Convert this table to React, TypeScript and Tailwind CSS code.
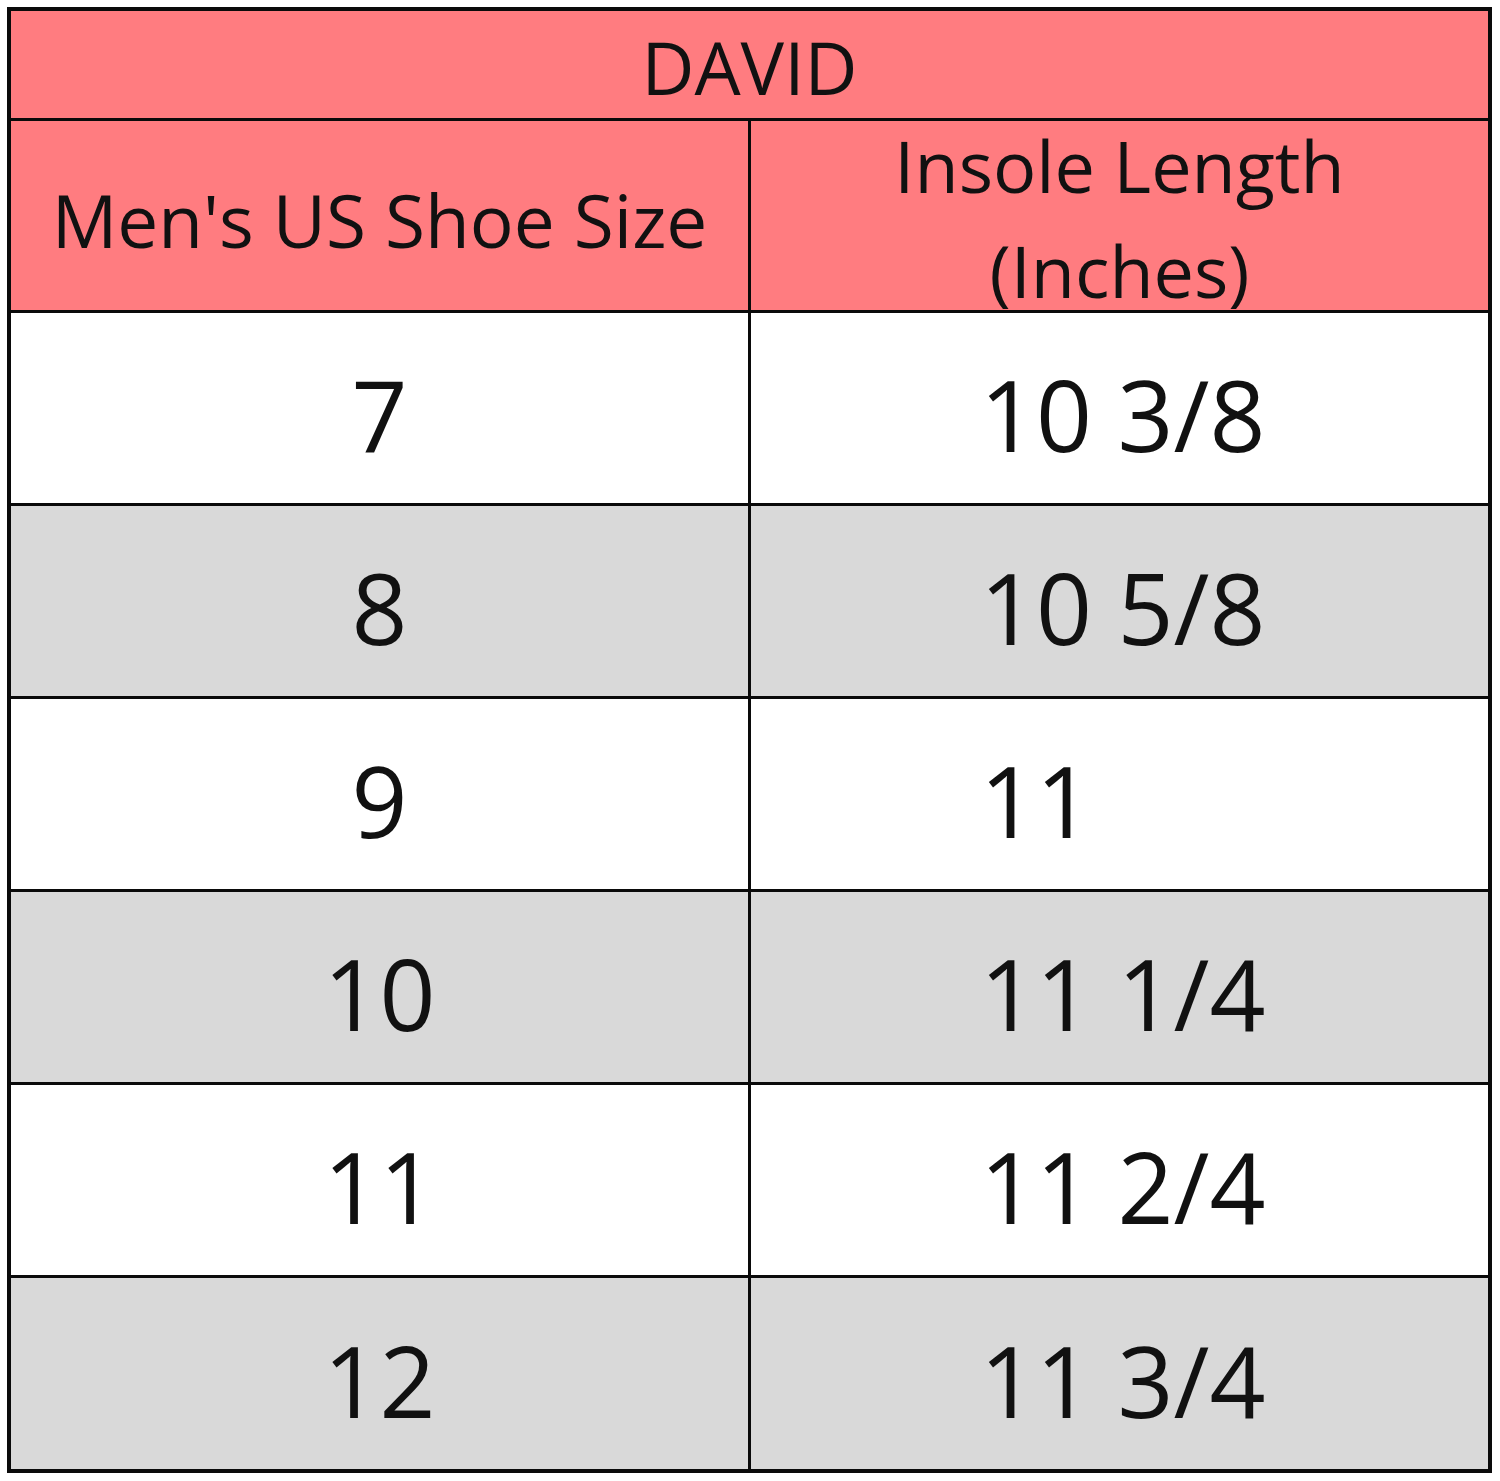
import React from "react";

const rows: [string, string][] = [
  ["7", "10 3/8"],
  ["8", "10 5/8"],
  ["9", "11"],
  ["10", "11 1/4"],
  ["11", "11 2/4"],
  ["12", "11 3/4"],
];

export default function App() {
  return (
    <div className="min-h-[1481px] w-[1500px] bg-white pt-[7px] pl-[7px]">
      <div
        className="w-[1485px] border-4 border-[#0a0a0a] text-[#111111] flex flex-col"
        style={{ fontFamily: "'Open Sans', 'Noto Sans', sans-serif" }}
      >
        <div className="h-[110px] border-b-[3px] border-[#0a0a0a] bg-[#ff7c80] flex items-center justify-center text-[73px] leading-none pt-[4px]">
          DAVID
        </div>
        <div className="h-[192px] border-b-[3px] border-[#0a0a0a] bg-[#ff7c80] flex">
          <div className="w-[740px] border-r-[3px] border-[#0a0a0a] flex items-center justify-center text-[73px] leading-none pt-[8px]">
            Men's US Shoe Size
          </div>
          <div className="flex-1 flex flex-col items-center justify-center gap-[25px] text-[72px] leading-[80px] pt-[4px]">
            <span>Insole Length</span>
            <span>(Inches)</span>
          </div>
        </div>
        {rows.map(([size, len], i) => (
          <div
            key={size}
            className={`flex ${i < rows.length - 1 ? "h-[193px] border-b-[3px]" : "h-[191px]"} border-[#0a0a0a] ${
              i % 2 === 1 ? "bg-[#d9d9d9]" : "bg-white"
            }`}
          >
            <div className="w-[740px] border-r-[3px] border-[#0a0a0a] flex items-center justify-center text-[98px] leading-none pt-[12px]">
              {size}
            </div>
            <div className="flex-1 flex items-center pl-[229px] text-[98px] leading-none pt-[12px]">
              {len}
            </div>
          </div>
        ))}
      </div>
    </div>
  );
}
